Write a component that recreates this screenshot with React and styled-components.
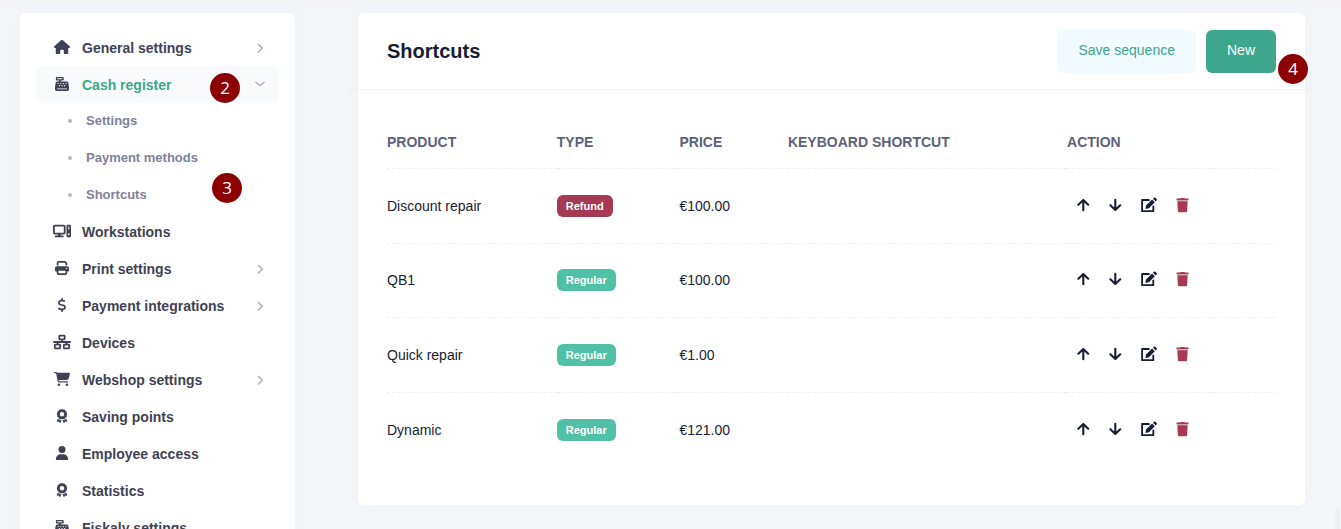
import React from 'react';
import styled, { createGlobalStyle, css } from 'styled-components';
import {
  FaAward,
  FaCartShopping,
  FaCashRegister,
  FaComputer,
  FaDollarSign,
  FaHouse,
  FaNetworkWired,
  FaPrint,
  FaUser,
} from 'react-icons/fa6';

const GlobalStyle = createGlobalStyle`
  *, *::before, *::after {
    box-sizing: border-box;
  }
  html, body {
    height: 100%;
  }
  body {
    margin: 0;
    overflow: hidden;
    background: linear-gradient(#f3f4f8, #f3f7fa 14px);
    color: #181c32;
    font-family: "Liberation Sans", Arial, sans-serif;
    font-size: 14px;
    line-height: 20px;
  }
  button {
    border: 0;
    font: inherit;
    cursor: pointer;
  }
`;

const PageStyles = styled.div`
  display: flex;
  align-items: flex-start;
  gap: 63px;
  padding: 13px 36px 0 20px;
`;

const SidebarStyles = styled.nav`
  position: relative;
  flex: 0 0 275px;
  padding: 16px;
  border-radius: 6px;
  background: #fff;
  box-shadow: 0 0 20px rgba(76, 87, 125, 0.03);
  ul {
    margin: 0;
    padding: 0;
    list-style: none;
  }
  ul ul {
    margin-top: -1px;
  }
`;

const MenuLink = styled.a`
  display: flex;
  align-items: center;
  height: 37px;
  padding: 0 13px 0 16px;
  border-radius: 6px;
  color: #3f4254;
  font-weight: 700;
  text-decoration: none;
  .icon {
    display: flex;
    justify-content: center;
    width: 20px;
    margin-right: 10px;
    padding-bottom: 2px;
    color: #3f4254;
  }
  .icon svg {
    flex: none;
  }
  .label {
    flex: 1;
  }
  ${({ $active }) => $active && css`
    background: #f9fafb;
    color: #3ea68c;
  `}
`;

const SubLink = styled.a`
  display: flex;
  align-items: center;
  gap: 14px;
  height: 37px;
  padding-left: 32px;
  color: #7e8299;
  font-size: 13px;
  font-weight: 700;
  text-decoration: none;
  &::before {
    content: '';
    width: 4px;
    height: 4px;
    border-radius: 50%;
    background: #b5b5c3;
  }
`;

const Chevron = styled.svg`
  width: 12px;
  height: 12px;
  fill: none;
  stroke: #a9aabf;
  stroke-width: 1.4;
`;

const CardStyles = styled.main`
  position: relative;
  flex: 1;
  padding: 0 29px 38px;
  border-radius: 6px;
  background: #fff;
  box-shadow: 0 0 20px rgba(76, 87, 125, 0.03);
`;

const CardHeader = styled.header`
  display: flex;
  align-items: center;
  gap: 10px;
  height: 77px;
  margin: 0 -37px;
  padding: 0 37px;
  border-bottom: 1px solid #eef0f3;
  h1 {
    flex: 1;
    margin: 0;
    font-size: 20px;
    line-height: 24px;
  }
`;

const ButtonStyles = styled.button`
  height: 43px;
  padding: 0 21px 2px;
  border-radius: 6px;
  background: ${({ $primary }) => ($primary ? '#3ea68c' : '#f1faff')};
  color: ${({ $primary }) => ($primary ? '#fff' : '#3ea68c')};
`;

const TableStyles = styled.table`
  width: 100%;
  margin-top: 26px;
  border-collapse: separate;
  border-spacing: 0;
  table-layout: fixed;
  th, td {
    padding: 0;
    text-align: left;
  }
  th {
    height: 53px;
    color: #5e6278;
    font-weight: 700;
    text-transform: uppercase;
  }
  td {
    height: 75px;
    padding-bottom: 1px;
  }
  tr:nth-child(even) td {
    height: 74px;
  }
  th, tr:not(:last-child) td {
    border-bottom: 1px dashed #eff0f2;
  }
`;

const Badge = styled.span`
  display: inline-block;
  padding: 1px 9px;
  border-radius: 6px;
  background: ${({ $refund }) => ($refund ? '#a63a55' : '#50c1a6')};
  color: #fff;
  font-size: 11px;
  font-weight: 700;
`;

const ActionsStyles = styled.div`
  display: flex;
  align-items: center;
  gap: 19px;
  padding: 0 0 2px 10px;
`;

const IconButton = styled.button`
  display: flex;
  padding: 0;
  background: none;
  color: ${({ $danger }) => ($danger ? '#a63a55' : '#181c32')};
`;

// numbered callouts float over the panels
const Step = styled.span`
  position: absolute;
  top: ${({ $top }) => $top}px;
  right: ${({ $right }) => $right}px;
  width: 30px;
  height: 30px;
  border-radius: 50%;
  background: #8b0000;
  color: #fff;
  font-family: "Open Sans", "Noto Sans", sans-serif;
  font-size: 17px;
  line-height: 30px;
  text-align: center;
`;

const ScrollThumb = styled.div`
  position: fixed;
  right: 1px;
  bottom: 0;
  width: 5px;
  height: 20px;
  background: #edf1f4;
`;

const menu = [
  { label: 'General settings', icon: FaHouse, size: 16, more: true },
  {
    label: 'Cash register',
    icon: FaCashRegister,
    active: true,
    items: ['Settings', 'Payment methods', 'Shortcuts'],
  },
  { label: 'Workstations', icon: FaComputer, size: 18 },
  { label: 'Print settings', icon: FaPrint, more: true },
  { label: 'Payment integrations', icon: FaDollarSign, more: true },
  { label: 'Devices', icon: FaNetworkWired, size: 18 },
  { label: 'Webshop settings', icon: FaCartShopping, size: 16, more: true },
  { label: 'Saving points', icon: FaAward },
  { label: 'Employee access', icon: FaUser },
  { label: 'Statistics', icon: FaAward },
  { label: 'Fiskaly settings', icon: FaCashRegister },
];

const shortcuts = [
  { product: 'Discount repair', type: 'Refund', price: '€100.00' },
  { product: 'QB1', type: 'Regular', price: '€100.00' },
  { product: 'Quick repair', type: 'Regular', price: '€1.00' },
  { product: 'Dynamic', type: 'Regular', price: '€121.00' },
];

const ArrowIcon = ({ down }) => (
  <svg width="13" height="14" viewBox="0 0 13 14" fill="none" stroke="currentColor" strokeWidth="2.1" strokeLinecap="round" strokeLinejoin="round">
    <path d={down ? 'M6.3 1.8v10M1.4 7.3 6.3 12l4.9-4.7' : 'M6.3 12.2v-10M1.4 6.7 6.3 2l4.9 4.7'} />
  </svg>
);

const EditIcon = () => (
  <svg width="16" height="16" viewBox="0 0 16 16" fill="currentColor">
    <path d="M8.6 3H1.1v11.2h11.2V8.8" fill="none" stroke="currentColor" strokeWidth="1.8" strokeLinejoin="round" />
    <path d="m11 2.5 2.8 2.8-5.9 5.9-3.5.9.6-3.6zM12 1.7l.9-.9a1.1 1.1 0 0 1 1.5 0l1.2 1.2a1.1 1.1 0 0 1 0 1.5l-.9.9z" />
  </svg>
);

const TrashIcon = () => (
  <svg width="13" height="16" viewBox="0 0 13 16" fill="currentColor">
    <path d="M4 1.6 4.4 1h4.2l.4.6h3.5v1.6H.5V1.6z" />
    <path d="M.9 3.2h11.2v1.2H.9z" opacity=".35" />
    <path d="M1.3 4.3h10.4l-.6 9.6a1.4 1.4 0 0 1-1.4 1.3H3.3a1.4 1.4 0 0 1-1.4-1.3z" />
  </svg>
);

function MenuItem({ label, icon: Icon, size = 14, more, active, items }) {
  return (
    <li>
      <MenuLink href="#" $active={active}>
        <span className="icon"><Icon size={size} /></span>
        <span className="label">{label}</span>
        {more && <Chevron viewBox="0 0 12 12"><path d="M4 2 8.3 6.3 4 10.6" /></Chevron>}
        {active && <Chevron viewBox="0 0 12 12"><path d="M1.5 3 6 6.5 10.5 3" /></Chevron>}
      </MenuLink>
      {items && (
        <ul>
          {items.map((item) => (
            <li key={item}><SubLink href="#">{item}</SubLink></li>
          ))}
        </ul>
      )}
    </li>
  );
}

function Sidebar() {
  return (
    <SidebarStyles>
      <ul>
        {menu.map((item) => <MenuItem key={item.label} {...item} />)}
      </ul>
      <Step $top={60} $right={55}>2</Step>
      <Step $top={160} $right={53}>3</Step>
    </SidebarStyles>
  );
}

function ShortcutTable() {
  return (
    <TableStyles>
      <colgroup>
        <col style={{ width: '19.1%' }} />
        <col style={{ width: '13.8%' }} />
        <col style={{ width: '12.2%' }} />
        <col style={{ width: '31.4%' }} />
        <col />
      </colgroup>
      <thead>
        <tr>
          <th>Product</th>
          <th>Type</th>
          <th>Price</th>
          <th>Keyboard shortcut</th>
          <th>Action</th>
        </tr>
      </thead>
      <tbody>
        {shortcuts.map(({ product, type, price }) => (
          <tr key={product}>
            <td>{product}</td>
            <td><Badge $refund={type === 'Refund'}>{type}</Badge></td>
            <td>{price}</td>
            <td />
            <td>
              <ActionsStyles>
                <IconButton aria-label="Move up"><ArrowIcon /></IconButton>
                <IconButton aria-label="Move down"><ArrowIcon down /></IconButton>
                <IconButton aria-label="Edit"><EditIcon /></IconButton>
                <IconButton aria-label="Delete" $danger><TrashIcon /></IconButton>
              </ActionsStyles>
            </td>
          </tr>
        ))}
      </tbody>
    </TableStyles>
  );
}

export default function App() {
  return (
    <>
      <GlobalStyle />
      <PageStyles>
        <Sidebar />
        <CardStyles>
          <CardHeader>
            <h1>Shortcuts</h1>
            <ButtonStyles type="button">Save sequence</ButtonStyles>
            <ButtonStyles type="button" $primary>New</ButtonStyles>
          </CardHeader>
          <ShortcutTable />
          <Step $top={41} $right={-3}>4</Step>
        </CardStyles>
      </PageStyles>
      <ScrollThumb />
    </>
  );
}
